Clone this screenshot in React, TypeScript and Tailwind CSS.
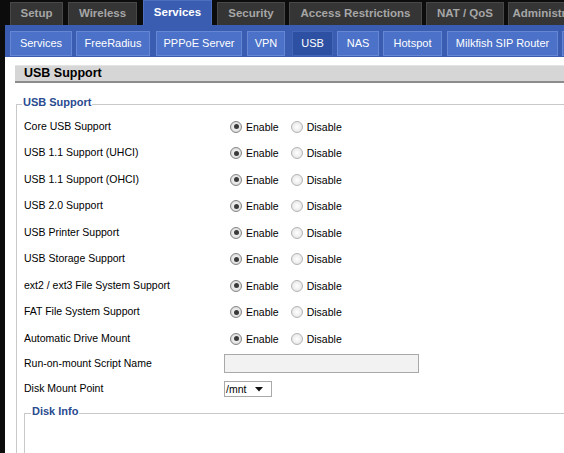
import React from "react";

const topTabs = [
  { label: "Setup", w: 53, ml: 10 },
  { label: "Wireless", w: 69, ml: 5 },
  { label: "Services", w: 69, ml: 6, active: true },
  { label: "Security", w: 68, ml: 5 },
  { label: "Access Restrictions", w: 133, ml: 4 },
  { label: "NAT / QoS", w: 78, ml: 4 },
  { label: "Administration", w: 90, ml: 4 },
];

const subTabs = [
  { label: "Services", w: 62, ml: 5 },
  { label: "FreeRadius", w: 74, ml: 4 },
  { label: "PPPoE Server", w: 86, ml: 6 },
  { label: "VPN", w: 38, ml: 5 },
  { label: "USB", w: 41, ml: 7, active: true },
  { label: "NAS", w: 42, ml: 4 },
  { label: "Hotspot", w: 59, ml: 4 },
  { label: "Milkfish SIP Router", w: 111, ml: 5 },
  { label: "", w: 60, ml: 4 },
];

const radioRows = [
  "Core USB Support",
  "USB 1.1 Support (UHCI)",
  "USB 1.1 Support (OHCI)",
  "USB 2.0 Support",
  "USB Printer Support",
  "USB Storage Support",
  "ext2 / ext3 File System Support",
  "FAT File System Support",
  "Automatic Drive Mount",
];

function Radio({ checked }: { checked?: boolean }) {
  return (
    <span
      className={
        "flex shrink-0 w-[12px] h-[12px] rounded-full items-center justify-center border " +
        (checked
          ? "border-[#858585] bg-[radial-gradient(circle,#ffffff_0%,#e2e2e2_60%,#c4c4c4_100%)]"
          : "border-[#b4b4b4] bg-[radial-gradient(circle,#ffffff_0%,#ececec_60%,#d6d6d6_100%)]")
      }
    >
      {checked && <span className="w-[5px] h-[5px] rounded-full bg-[#3a3a3a]" />}
    </span>
  );
}

export default function App() {
  const font = { fontFamily: '"Liberation Sans", Arial, sans-serif' };
  return (
    <div
      className="w-[564px] h-[453px] bg-[#0c0c0c] overflow-hidden relative"
      style={font}
    >
      {/* top tabs */}
      <div className="flex h-[25px] w-[700px] items-end">
        {topTabs.map((t) => (
          <div
            key={t.label}
            style={{ width: t.w, marginLeft: t.ml }}
            className={
              "shrink-0 flex items-center justify-center font-bold text-[11.5px] " +
              (t.active
                ? "h-[25px] bg-[#3a5db2] text-white border-t border-x border-[#4e6fc0]"
                : "h-[23px] bg-[#353535] text-[#a6a6a6] border-t border-x border-[#484848]")
            }
          >
            {t.label}
          </div>
        ))}
      </div>

      {/* sub tabs bar */}
      <div className="ml-[5px] h-[32px] bg-[#3a5db2] flex items-start pt-[6px] w-[700px]">
        {subTabs.map((t, i) => (
          <div
            key={i}
            style={{ width: t.w, marginLeft: t.ml }}
            className={
              "shrink-0 h-[25px] flex items-center justify-center text-white text-[11px] border " +
              (t.active
                ? "bg-[#2e50a2] border-[#4466b6]"
                : "bg-[#4b71c8] border-[#6688d4]")
            }
          >
            {t.label}
          </div>
        ))}
      </div>

      {/* content */}
      <div className="ml-[5px] bg-white h-[400px] pl-[10px] pt-[8px] w-[700px]">
        <div className="h-[18px] bg-[#d6d6d6] border-t border-[#e4e4e4] border-b-2 border-b-[#8c8c8c] pl-[9px] flex items-center">
          <span className="font-bold text-[12.5px] text-black leading-none">USB Support</span>
        </div>

        <fieldset className="mt-[12px] ml-[1px] border border-[#c9c9c9] px-[7px] h-[400px]">
          <legend className="ml-[-2px] px-[1px] text-[11px] font-bold text-[#2a4b8f] leading-[14px] pb-[4px]">
            USB Support
          </legend>
          {radioRows.map((r) => (
            <div key={r} className="h-[26.5px] flex items-center text-[10.5px] text-black pt-[1px]">
              <span className="w-[200px] shrink-0">{r}</span>
              <span className="ml-[6px] flex items-center">
                <Radio checked />
                <span className="ml-[4px] pt-[2px]">Enable</span>
                <span className="ml-[12px] flex items-center"><Radio /></span>
                <span className="ml-[4px] pt-[2px]">Disable</span>
              </span>
            </div>
          ))}
          <div className="h-[24px] flex items-center text-[10.5px] text-black">
            <span className="w-[200px] shrink-0">Run-on-mount Script Name</span>
            <div className="w-[195px] h-[19px] bg-[#f2f2f2] border border-[#a9a9a9]" />
          </div>
          <div className="h-[27px] flex items-center text-[10.5px] text-black">
            <span className="w-[200px] shrink-0">Disk Mount Point</span>
            <div className="w-[48px] h-[16px] border border-[#a9a9a9] bg-white flex items-center pl-[1px]">
              <span className="text-[10.5px] leading-none">/mnt</span>
              <svg className="ml-[9px]" width="8" height="5" viewBox="0 0 8 5">
                <polygon points="0,0 8,0 4,4.5" fill="#111" />
              </svg>
            </div>
          </div>
          <fieldset className="mt-[1px] border border-[#c9c9c9] px-[6px] h-[200px]">
            <legend className="px-[1px] text-[11px] font-bold text-[#2a4b8f] leading-[14px] pb-[6px]">
              Disk Info
            </legend>
          </fieldset>
        </fieldset>
      </div>
    </div>
  );
}
